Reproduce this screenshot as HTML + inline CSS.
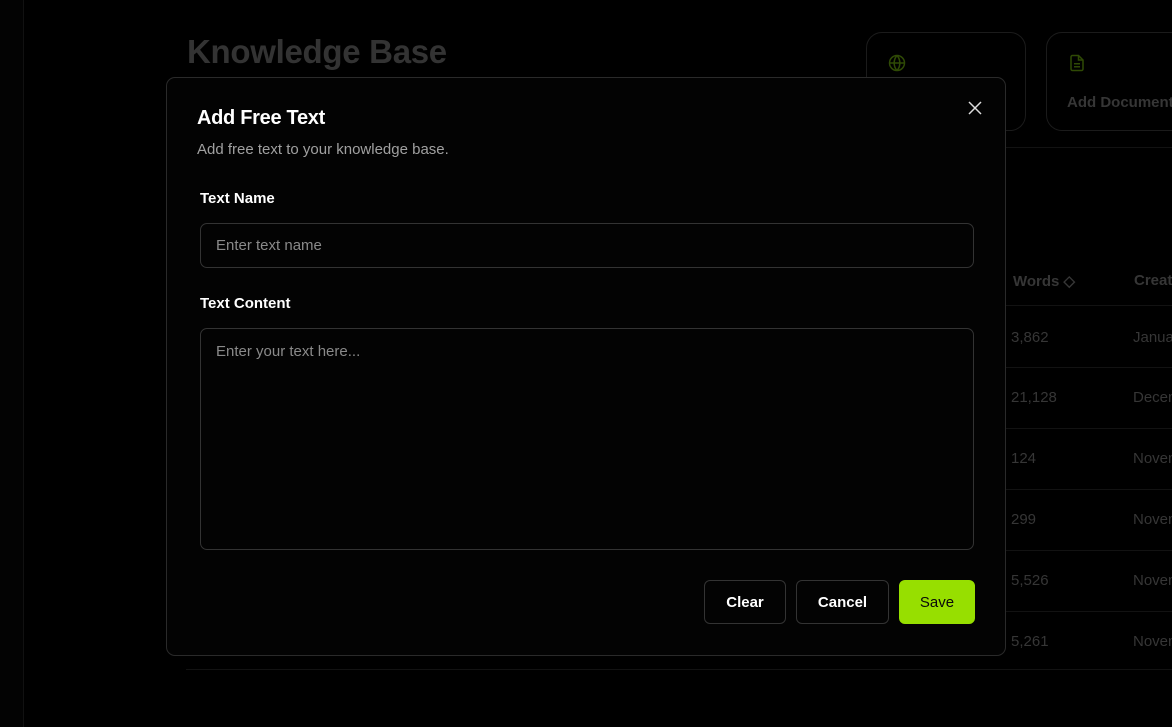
<!DOCTYPE html>
<html><head><style>
*{box-sizing:border-box;margin:0;padding:0}
body{width:1172px;height:727px;background:#000;font-family:"Liberation Sans",sans-serif;position:relative;overflow:hidden}
.abs{position:absolute}
.sb{left:0;top:0;width:24px;height:727px;background:#030303;border-right:1px solid #111}
.title{left:187px;top:33px;font-size:33px;font-weight:bold;color:#333;letter-spacing:-0.3px}
.card{top:32px;height:99px;border:1px solid #1b1b1b;border-radius:16px}
.line{height:1px;background:#121212;left:186px;right:0}
.cell{color:#363636;font-size:15px}
.modal{left:166px;top:77px;width:840px;height:579px;background:#030303;border:1px solid #2a2a2a;border-radius:9px}
.input{border:1px solid #333;border-radius:7px;position:absolute;color:#8a8a8a;font-size:15px}
.btn{position:absolute;top:502px;height:44px;border:1px solid #333;border-radius:6px;color:#fff;font-weight:bold;font-size:15px;display:flex;align-items:center;justify-content:center}
</style></head><body>
<div class="abs sb"></div>
<div class="abs title">Knowledge Base</div>
<div class="abs card" style="left:866px;width:160px">
<svg class="abs" style="left:21px;top:21px" width="18" height="18" viewBox="0 0 24 24" fill="none" stroke="#2f4a05" stroke-width="2"><circle cx="12" cy="12" r="10"/><path d="M2 12h20M12 2a15 15 0 0 1 0 20M12 2a15 15 0 0 0 0 20"/></svg></div>
<div class="abs card" style="left:1046px;width:160px">
<svg class="abs" style="left:21px;top:20px" width="18" height="20" viewBox="0 0 24 24" fill="none" stroke="#2f4a05" stroke-width="2"><path d="M14 2H6a2 2 0 0 0-2 2v16a2 2 0 0 0 2 2h12a2 2 0 0 0 2-2V8z"/><path d="M14 2v6h6M8 13h8M8 17h8"/></svg>
<div class="abs" style="left:20px;top:61px;color:#363636;font-weight:bold;font-size:15px;white-space:nowrap">Add Document</div></div>
<div class="abs line" style="top:147px"></div>
<div class="abs cell" style="left:1013px;top:272px;font-weight:bold">Words ◇</div>
<div class="abs cell" style="left:1134px;top:272px;font-weight:bold">Created</div>
<div class="abs line" style="top:305px"></div>
<div class="abs cell" style="left:1011px;top:329px">3,862</div><div class="abs cell" style="left:1133px;top:329px">January</div>
<div class="abs line" style="top:367px"></div>
<div class="abs cell" style="left:1011px;top:389px">21,128</div><div class="abs cell" style="left:1133px;top:389px">December</div>
<div class="abs line" style="top:428px"></div>
<div class="abs cell" style="left:1011px;top:450px">124</div><div class="abs cell" style="left:1133px;top:450px">November</div>
<div class="abs line" style="top:489px"></div>
<div class="abs cell" style="left:1011px;top:511px">299</div><div class="abs cell" style="left:1133px;top:511px">November</div>
<div class="abs line" style="top:550px"></div>
<div class="abs cell" style="left:1011px;top:572px">5,526</div><div class="abs cell" style="left:1133px;top:572px">November</div>
<div class="abs line" style="top:611px"></div>
<div class="abs cell" style="left:1011px;top:633px">5,261</div><div class="abs cell" style="left:1133px;top:633px">November</div>
<div class="abs line" style="top:669px"></div>
<div class="abs modal">
<div class="abs" style="left:30px;top:29px;color:#fff;font-weight:bold;font-size:20px;letter-spacing:-0.3px">Add Free Text</div>
<div class="abs" style="left:30px;top:63px;color:#a0a0a0;font-size:15px">Add free text to your knowledge base.</div>
<svg class="abs" style="left:801px;top:23px" width="14" height="14" viewBox="0 0 14 14" stroke="#ddd" stroke-width="1.5"><path d="M1 1l12 12M13 1L1 13"/></svg>
<div class="abs" style="left:33px;top:112px;color:#fff;font-weight:bold;font-size:15px">Text Name</div>
<div class="input" style="left:33px;top:145px;width:774px;height:45px;padding:13px 15px">Enter text name</div>
<div class="abs" style="left:33px;top:217px;color:#fff;font-weight:bold;font-size:15px">Text Content</div>
<div class="input" style="left:33px;top:250px;width:774px;height:222px;padding:14px 15px">Enter your text here...</div>
<div class="btn" style="left:537px;width:82px">Clear</div>
<div class="btn" style="left:629px;width:93px">Cancel</div>
<div class="btn" style="left:732px;width:76px;background:#97df00;border-color:#97df00;color:#0a0a0a;font-weight:normal">Save</div>
</div>
</body></html>
